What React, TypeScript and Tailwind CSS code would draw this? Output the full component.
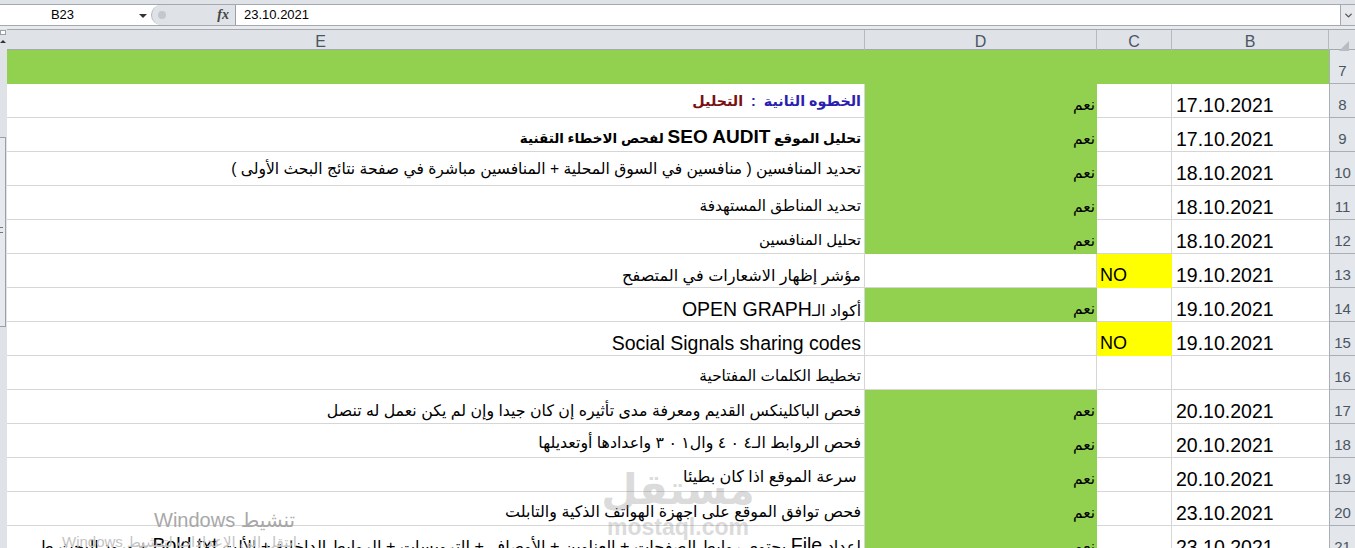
import { ChevronDown } from "lucide-react";

const cols = "grid grid-cols-[858px_232px_75px_157px_26px]";

type Row = {
  n: number;
  e: React.ReactNode;
  d?: boolean;
  no?: boolean;
  date?: string;
  // font size + top padding of the E cell, the sheet's rows differ a bit
  cell: string;
};

const rows: Row[] = [
  {
    n: 8,
    e: (
      <b className="text-[14.3px]">
        <span className="text-[#2a1fb0]">{"الخطوه الثانية  :  "}</span>
        <span className="text-[#7a1010]">التحليل</span>
      </b>
    ),
    d: true,
    date: "17.10.2021",
    cell: "pt-[6px] text-[15.6px]",
  },
  {
    n: 9,
    e: (
      <b className="text-[13.5px]">
        تحليل الموقع <span className="text-[19px]">SEO AUDIT</span> لفحص الاخطاء التقنية
      </b>
    ),
    d: true,
    date: "17.10.2021",
    cell: "pt-[8px] text-[15.6px]",
  },
  { n: 10, e: "تحديد المنافسين ( منافسين في السوق المحلية + المنافسين مباشرة في صفحة نتائج البحث الأولى )", d: true, date: "18.10.2021", cell: "pt-[6px] text-[15.6px]" },
  { n: 11, e: "تحديد المناطق المستهدفة", d: true, date: "18.10.2021", cell: "pt-[9px] text-[15.3px]" },
  { n: 12, e: "تحليل المنافسين", d: true, date: "18.10.2021", cell: "pt-[9px] text-[15px]" },
  { n: 13, e: "مؤشر إظهار الاشعارات في المتصفح", no: true, date: "19.10.2021", cell: "pt-[10px] text-[16.1px]" },
  {
    n: 14,
    e: (
      <>
        أكواد الـ<span className="text-[19.5px]">OPEN GRAPH</span>
      </>
    ),
    d: true,
    date: "19.10.2021",
    cell: "pt-[10px] text-[15.6px]",
  },
  { n: 15, e: <span className="text-[19.5px]">Social Signals sharing codes</span>, no: true, date: "19.10.2021", cell: "pt-[10px] text-[15.6px]" },
  { n: 16, e: "تخطيط الكلمات المفتاحية", cell: "pt-[9px] text-[15.3px]" },
  { n: 17, e: "فحص الباكلينكس القديم ومعرفة مدى تأثيره إن كان جيدا وإن لم يكن نعمل له تنصل", d: true, date: "20.10.2021", cell: "pt-[10px] text-[15.8px]" },
  { n: 18, e: "فحص الروابط الـ٤ ٠ ٤ وال١ ٠ ٣ واعدادها أوتعديلها", d: true, date: "20.10.2021", cell: "pt-[8px] text-[15.8px]" },
  { n: 19, e: " سرعة الموقع اذا كان بطيئا", d: true, date: "20.10.2021", cell: "pt-[8px] text-[16px]" },
  { n: 20, e: "فحص توافق الموقع على اجهزة الهواتف الذكية والتابلت", d: true, date: "23.10.2021", cell: "pt-[9px] text-[15.9px]" },
  {
    n: 21,
    e: (
      <>
        إعداد <span className="text-[19.5px]">File</span> يحتوي روابط الصفحات + العناوين + الأوصاف + الترويسات + الروابط الداخلية + الألت{" "}
        <span className="text-[19.5px]">Bold txt</span> + ورود البحث طـ
      </>
    ),
    d: true,
    date: "23.10.2021",
    cell: "pt-[8px] text-[16.2px]",
  },
];

function HeaderCell({ label, wide }: { label?: string; wide?: boolean }) {
  return (
    <div className={`flex items-center justify-center border-r border-[#b4b9bf] text-[16px] text-[#4a5563] ${wide ? "pr-[230px]" : ""}`}>{label}</div>
  );
}

function SheetRow({ row }: { row: Row }) {
  return (
    <div className={`${cols} h-[34px]`}>
      <div dir="rtl" className={`overflow-hidden whitespace-pre border-b border-r border-[#d6d6d6] pr-[3px] leading-[22px] text-black ${row.cell}`}>
        {row.e}
      </div>
      {row.d ? (
        <div dir="rtl" className="bg-[#92d050] pr-[2px] pt-[11px] text-[15.5px] leading-[20px] text-black">
          نعم
        </div>
      ) : (
        <div className="border-b border-r border-[#d6d6d6]" />
      )}
      {row.no ? (
        <div className="bg-[#ffff00] pl-[3px] pt-[9px] text-[18px] leading-[24px] text-black">NO</div>
      ) : (
        <div className="border-b border-r border-[#d6d6d6]" />
      )}
      <div className="border-b border-[#d6d6d6] pl-[4px] pt-[9px] text-[19.5px] leading-[24px] text-black">{row.date}</div>
      <RowNum n={row.n} />
    </div>
  );
}

function RowNum({ n }: { n: number }) {
  return (
    <div className="flex items-end justify-center border-b border-l border-[#a9afb6] bg-[#e3e6ea] pb-[2px] text-[15px] leading-[20px] text-[#4a5563]">
      {n}
    </div>
  );
}

export default function App() {
  return (
    <div className="relative h-[548px] w-[1355px] overflow-hidden bg-white font-['Liberation_Sans','DejaVu_Sans',sans-serif]">
      {/* formula bar */}
      <div className="h-[4px] bg-[#dfe2e7]" />
      <div className="flex h-[22px] items-stretch border-y border-[#a4a9af]">
        <div className="relative flex w-[151px] items-center justify-center pr-[26px] text-[13px] text-black">
          B23
          <span className="absolute right-[4px] top-[9px] h-0 w-0 border-x-[4px] border-t-[4px] border-x-transparent border-t-[#333]" />
        </div>
        <div className="relative flex w-[85px] items-center justify-end rounded-l-full border-x border-l-[#b4b8be] border-r-[#9aa0a6] bg-[#dfe2e7] pr-[6px]">
          <span className="absolute left-[6px] top-[6px] h-[8px] w-[8px] rounded-full bg-[#c4c7cc]" />
          <span className="font-['Liberation_Serif',serif] text-[14px] font-bold italic leading-none text-[#444]">fx</span>
        </div>
        <div className="flex-1 pl-[8px] text-[13px] leading-[20px] text-black">23.10.2021</div>
        <div className="flex w-[15px] items-center justify-center border-l border-[#a4a9af] bg-[#e6e8ec]">
          <ChevronDown size={11} strokeWidth={3} className="text-[#555]" />
        </div>
      </div>
      <div className="h-[3px] bg-[#e8eaee]" />

      {/* sheet */}
      <div className="flex">
        <div className="relative h-[519px] w-[7px] shrink-0 bg-[#dfe2e7]">
          <div className="absolute left-0 top-[1px] h-[5px] w-[6px] border border-[#9aa0a6] bg-white" />
          <div className="absolute left-0 top-[108px] h-[190px] w-[6px] border-y border-r border-[#9aa0a6] bg-[#e6e9ee]" />
          <div className="absolute left-0 top-[198px] h-[6px] w-[3px] border-y border-[#777]" />
          <div className="absolute left-0 top-[11px] h-0 w-0 border-x-[3px] border-b-[3px] border-x-transparent border-b-[#333]" />
        </div>
        <div className="flex-1">
          <div className={`${cols} h-[21px] border-y border-[#a4a9af] bg-[#dfe2e7]`}>
            <HeaderCell label="E" wide />
            <HeaderCell label="D" />
            <HeaderCell label="C" />
            <HeaderCell label="B" />
            <div className="relative">
              <span className="absolute bottom-[3px] right-[6px] h-0 w-0 border-b-[10px] border-l-[10px] border-b-[#b9bdc3] border-l-transparent" />
            </div>
          </div>
          <div className={`${cols} h-[34px]`}>
            <div className="col-span-4 bg-[#92d050]" />
            <RowNum n={7} />
          </div>
          {rows.map((row) => (
            <SheetRow key={row.n} row={row} />
          ))}
        </div>
      </div>

      {/* mostaql watermark */}
      <div className="pointer-events-none absolute left-[600px] top-[464px] w-[156px] text-center leading-none text-[#8a8a8a] opacity-30">
        <div dir="rtl" className="text-[42px] font-bold leading-[52px]">
          مستقل
        </div>
        <div className="text-[23px] font-bold">mostaql.com</div>
      </div>

      {/* windows activation */}
      <div dir="rtl" className="pointer-events-none absolute left-[154px] top-[508px] text-[20px] leading-[24px] text-[#a8a8a8]">
        تنشيط Windows
      </div>
      <div dir="rtl" className="pointer-events-none absolute left-[62px] top-[534px] text-[15px] leading-[16px] text-[#c4c4c4]">
        انتقل إلى الإعدادات لتنشيط Windows
      </div>
    </div>
  );
}
